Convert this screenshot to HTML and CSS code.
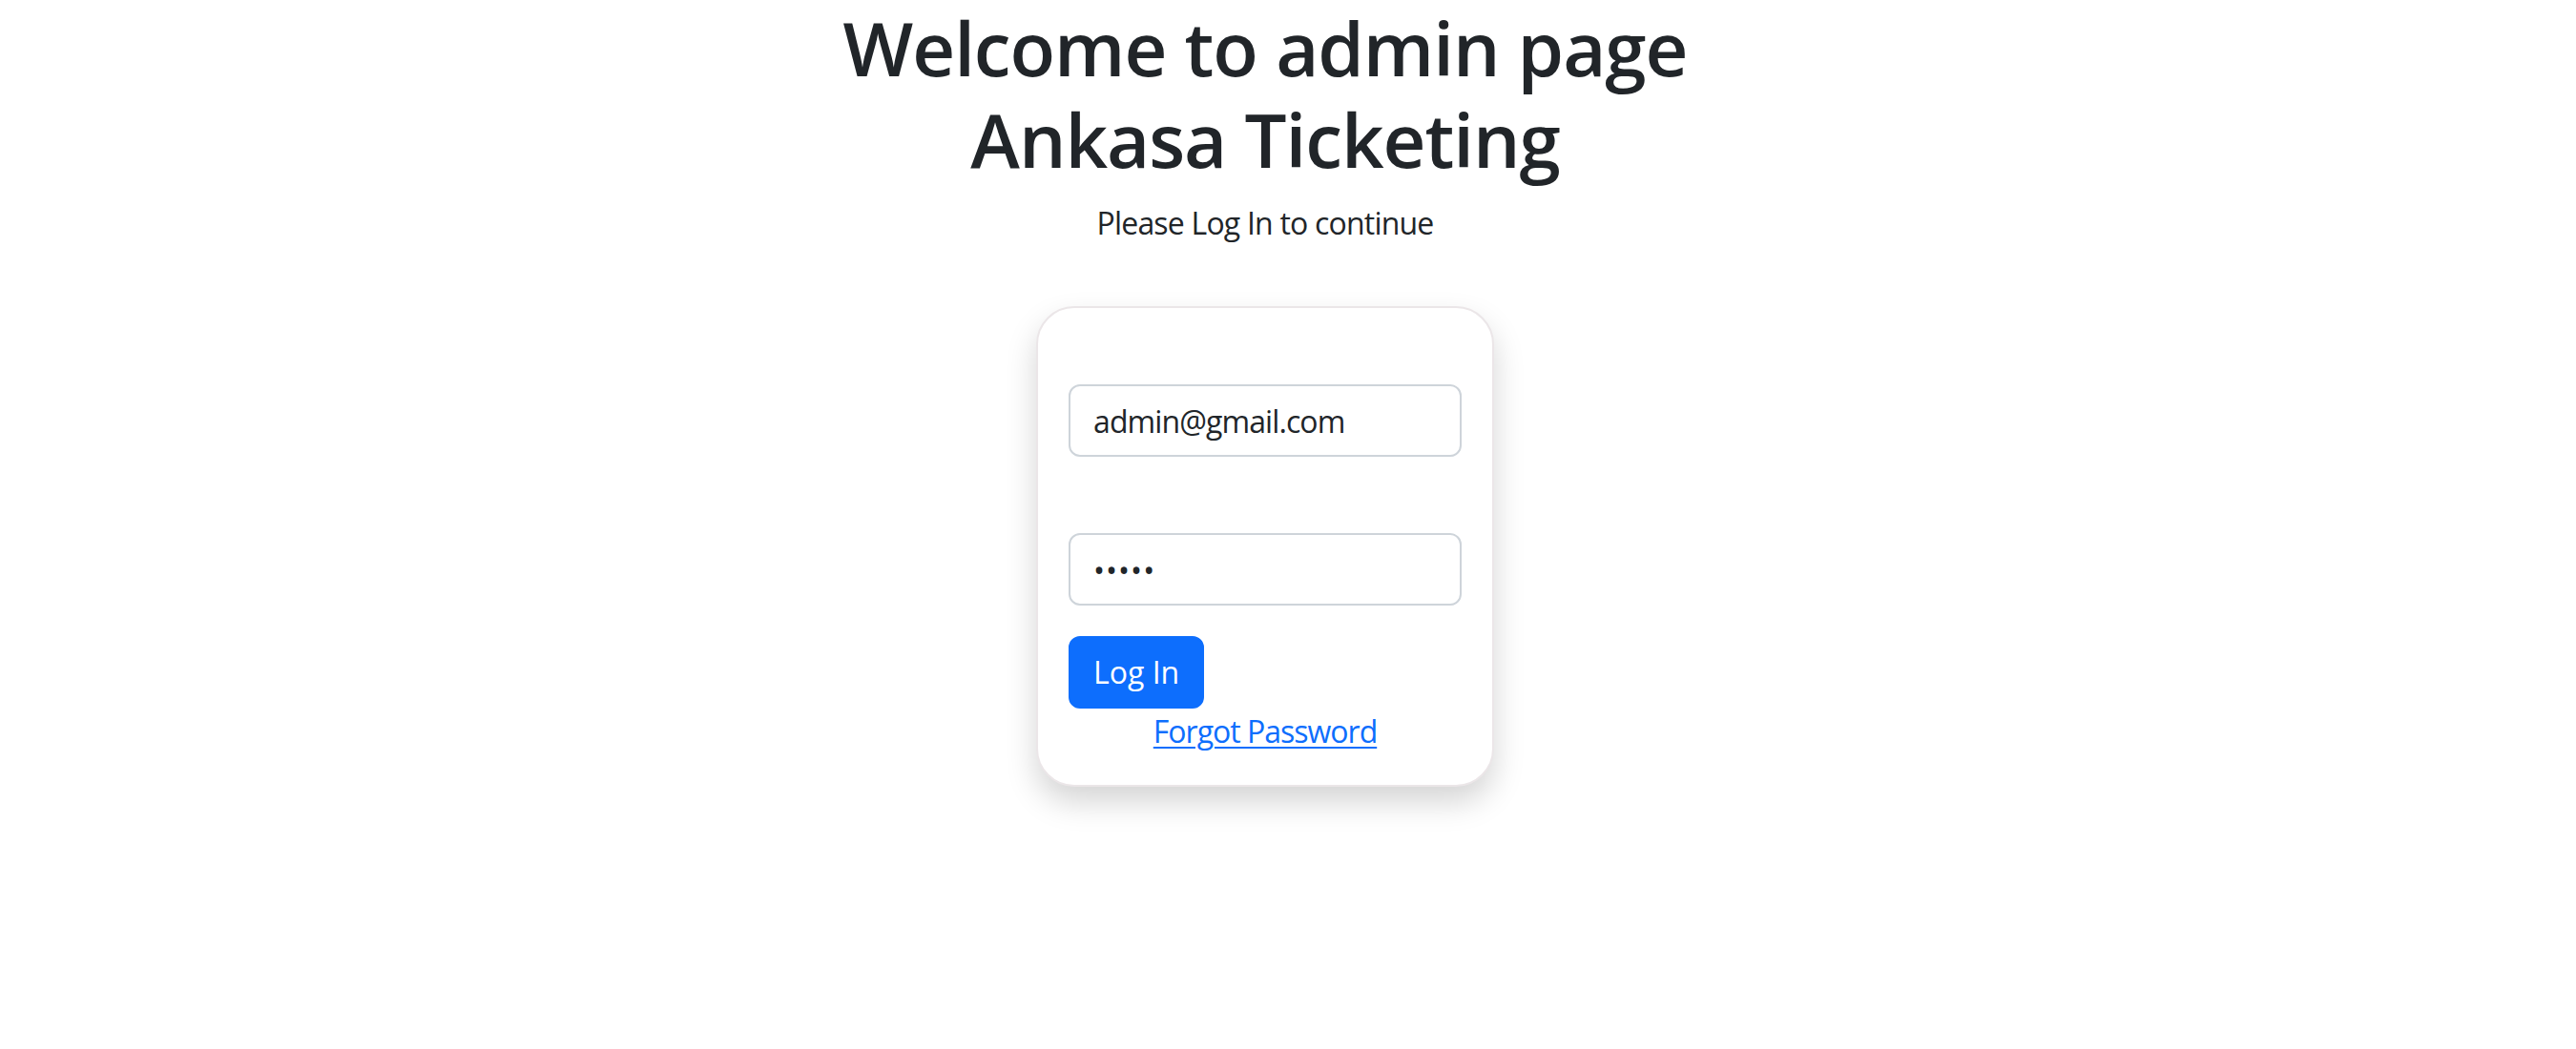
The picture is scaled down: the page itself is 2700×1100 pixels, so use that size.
FILE: index.html
```html
<!DOCTYPE html>
<html lang="en">
<head>
<meta charset="utf-8">
<title>Admin Login - Ankasa Ticketing</title>
<link rel="stylesheet" href="styles.css">
</head>
<body>
<main class="page">
  <h1 class="title"><span class="title-line">Welcome to admin page</span><span class="title-line">Ankasa Ticketing</span></h1>
  <p class="subtitle">Please Log In to continue</p>
  <form class="card">
    <div class="field">
      <label class="field-label" for="email"></label>
      <input class="control" id="email" type="email" value="admin@gmail.com">
    </div>
    <div class="field">
      <label class="field-label" for="password"></label>
      <input class="control control-password" id="password" type="password" value="admin">
    </div>
    <button class="btn" type="button">Log In</button>
    <a class="forgot" href="#">Forgot Password</a>
  </form>
</main>
</body>
</html>
```
FILE: styles.css
```css
* { box-sizing: border-box; }

html, body {
  min-height: 100%;
}

body {
  margin: 0;
  background: #ffffff;
  color: #212529;
  font-family: "Open Sans", "Noto Sans", sans-serif;
  font-size: 32px;
  line-height: 48px;
}

.page {
  display: flex;
  flex-direction: column;
  align-items: center;
  padding-right: 48px;
  padding-bottom: 80px;
  text-align: center;
}

.title {
  margin: 0 0 18px;
  display: flex;
  flex-direction: column;
  align-items: center;
  font-size: 78px;
  font-weight: 600;
  letter-spacing: -1.05px;
}

.title-line {
  display: block;
  height: 96px;
  line-height: 100px;
}

.subtitle {
  margin: 0 0 32px;
  letter-spacing: -0.8px;
}

.card {
  width: 480px;
  margin-top: 31px;
  padding: 32px;
  display: flex;
  flex-direction: column;
  align-items: stretch;
  text-align: left;
  background: #ffffff;
  border: 2px solid #ebe6e8;
  border-radius: 40px;
  box-shadow: 0 16px 32px rgba(0, 0, 0, 0.17);
}

.field {
  display: flex;
  flex-direction: column;
  margin-bottom: 32px;
}

.field-label {
  display: block;
  height: 48px;
}

.control {
  width: 100%;
  height: 76px;
  padding: 12px 24px;
  border: 2px solid #ced4da;
  border-radius: 12px;
  background: #ffffff;
  color: #212529;
  font-family: inherit;
  font-size: 32px;
  line-height: 48px;
  letter-spacing: -0.9px;
  outline: none;
}

.control-password {
  letter-spacing: 1px;
}

.btn {
  align-self: flex-start;
  height: 76px;
  padding: 12px 24px;
  border: 2px solid #0d6efd;
  border-radius: 12px;
  background: #0d6efd;
  color: #ffffff;
  font-family: inherit;
  font-size: 32px;
  line-height: 48px;
}

.forgot {
  display: block;
  text-align: center;
  color: #0d6efd;
  text-decoration: underline;
  text-decoration-thickness: 2px;
  text-underline-offset: 4px;
  letter-spacing: -1px;
}
```
